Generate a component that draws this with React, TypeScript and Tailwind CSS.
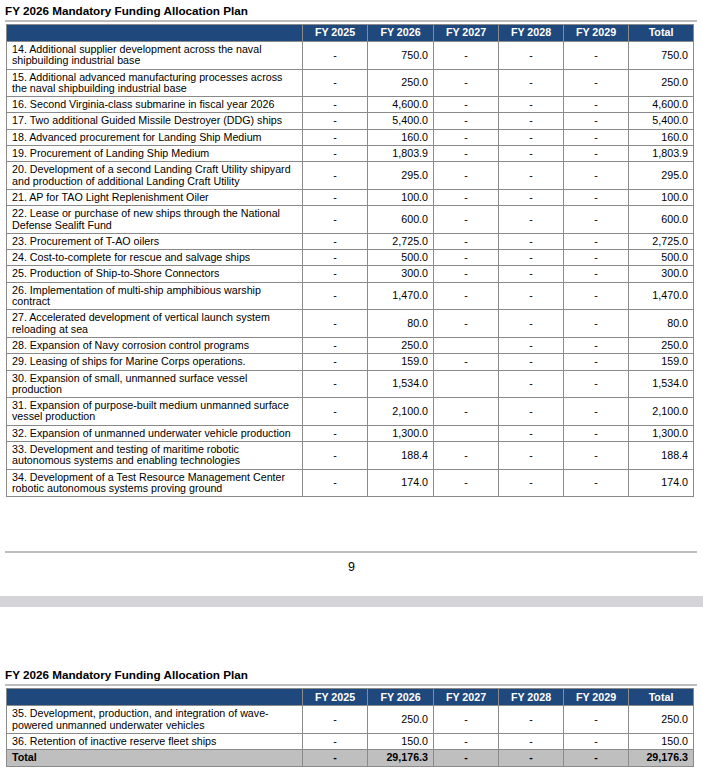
type Row = { desc: string; vals: string[] };

const HEADS = ["FY 2025", "FY 2026", "FY 2027", "FY 2028", "FY 2029", "Total"];

const d = (desc: string, fy26: string, fy27 = "-"): Row => ({
  desc,
  vals: ["-", fy26, fy27, "-", "-", fy26],
});

const page1: Row[] = [
  d("14. Additional supplier development across the naval\nshipbuilding industrial base", "750.0"),
  d("15. Additional advanced manufacturing processes across\nthe naval shipbuilding industrial base", "250.0"),
  d("16. Second Virginia-class submarine in fiscal year 2026", "4,600.0"),
  d("17. Two additional Guided Missile Destroyer (DDG) ships", "5,400.0"),
  d("18. Advanced procurement for Landing Ship Medium", "160.0"),
  d("19. Procurement of Landing Ship Medium", "1,803.9"),
  d("20. Development of a second Landing Craft Utility shipyard\nand production of additional Landing Craft Utility", "295.0"),
  d("21. AP for TAO Light Replenishment Oiler", "100.0"),
  d("22. Lease or purchase of new ships through the National\nDefense Sealift Fund", "600.0"),
  d("23. Procurement of T-AO oilers", "2,725.0"),
  d("24. Cost-to-complete for rescue and salvage ships", "500.0"),
  d("25. Production of Ship-to-Shore Connectors", "300.0"),
  d("26. Implementation of multi-ship amphibious warship\ncontract", "1,470.0"),
  d("27. Accelerated development of vertical launch system\nreloading at sea", "80.0"),
  d("28. Expansion of Navy corrosion control programs", "250.0", ""),
  d("29. Leasing of ships for Marine Corps operations.", "159.0"),
  d("30. Expansion of small, unmanned surface vessel\nproduction", "1,534.0", ""),
  d("31. Expansion of purpose-built medium unmanned surface\nvessel production", "2,100.0"),
  d("32. Expansion of unmanned underwater vehicle production", "1,300.0", ""),
  d("33. Development and testing of maritime robotic\nautonomous systems and enabling technologies", "188.4"),
  d("34. Development of a Test Resource Management Center\nrobotic autonomous systems proving ground", "174.0"),
];

const page2: Row[] = [
  d("35. Development, production, and integration of wave-\npowered unmanned underwater vehicles", "250.0"),
  d("36. Retention of inactive reserve fleet ships", "150.0"),
];

const cell = "border border-[#8a8a8a] py-[2px] align-middle";

function FundingTable({ rows, total }: { rows: Row[]; total?: boolean }) {
  return (
    <table className="ml-[1px] mt-[2px] w-[687px] table-fixed border-collapse text-[10.7px] leading-[11.3px] text-black">
      <colgroup>
        <col className="w-[296px]" />
        <col className="w-[65px]" />
        <col className="w-[66px]" />
        <col className="w-[65px]" />
        <col className="w-[65px]" />
        <col className="w-[65px]" />
        <col className="w-[65px]" />
      </colgroup>
      <thead>
        <tr className="h-[17px] bg-[#1f497d] font-bold text-white">
          <th className="border border-[#8a8a8a]" />
          {HEADS.map((h) => (
            <th key={h} className="border border-[#8a8a8a] text-center">
              {h}
            </th>
          ))}
        </tr>
      </thead>
      <tbody>
        {rows.map((r) => (
          <tr key={r.desc}>
            <td className={`${cell} whitespace-pre-line pl-[5px] pr-[2px]`}>{r.desc}</td>
            {r.vals.map((v, i) => (
              <td
                key={i}
                className={`${cell} ${v === "-" || v === "" ? "text-center" : "pr-[5px] text-right"}`}
              >
                {v}
              </td>
            ))}
          </tr>
        ))}
        {total && (
          <tr className="h-[17px] bg-[#bfbfbf] font-bold">
            <td className={`${cell} pl-[5px]`}>Total</td>
            <td className={`${cell} text-center`}>-</td>
            <td className={`${cell} pr-[5px] text-right`}>29,176.3</td>
            <td className={`${cell} text-center`}>-</td>
            <td className={`${cell} text-center`}>-</td>
            <td className={`${cell} text-center`}>-</td>
            <td className={`${cell} pr-[5px] text-right`}>29,176.3</td>
          </tr>
        )}
      </tbody>
    </table>
  );
}

function Heading() {
  return (
    <>
      <div className="pt-[4px] text-[11.7px] font-bold leading-[14px] text-black">
        FY 2026 Mandatory Funding Allocation Plan
      </div>
      <div className="mt-[2px] h-[2px] w-[692px] bg-[#bdbdbd]" />
    </>
  );
}

export default function App() {
  return (
    <div className="min-h-[772px] w-[703px] bg-white font-['Liberation_Sans',Arial,sans-serif]">
      <section className="px-[5px]">
        <Heading />
        <FundingTable rows={page1} />
        <div className="mt-[54px] h-[2px] w-[692px] bg-[#bdbdbd]" />
        <div className="mt-[7px] text-center text-[12.5px] leading-[14px] text-black">9</div>
      </section>
      <div className="mt-[22px] h-[11px] bg-[#d4d4d9]" />
      <section className="mt-[57px] px-[5px]">
        <Heading />
        <FundingTable rows={page2} total />
      </section>
    </div>
  );
}
